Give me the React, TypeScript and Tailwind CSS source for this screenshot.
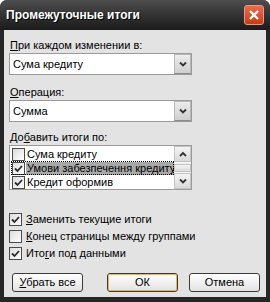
import React from "react";

const font = { fontFamily: '"Liberation Sans", Arial, sans-serif' };

function Check({ checked }: { checked?: boolean }) {
  return (
    <span className="w-[13px] h-[13px] shrink-0 border border-[#4a4a4a] bg-gradient-to-br from-[#dcdcdc] to-white flex items-center justify-center">
      {checked && (
        <svg width="9" height="9" viewBox="0 0 9 9">
          <path d="M1 4.5 L3.5 7 L8 2" fill="none" stroke="#2b2b2b" strokeWidth="1.8" />
        </svg>
      )}
    </span>
  );
}

function Chevron({ up }: { up?: boolean }) {
  return (
    <svg width="8" height="6" viewBox="0 0 8 6">
      <path
        d={up ? "M1 5 L4 2 L7 5" : "M1 1.5 L4 4.5 L7 1.5"}
        fill="none"
        stroke="#333"
        strokeWidth="1.8"
      />
    </svg>
  );
}

function Combo({ value }: { value: string }) {
  return (
    <div className="h-[22px] w-[183px] border border-[#9a9a9a] bg-white flex items-center">
      <span className="flex-1 pl-[3px] text-black">{value}</span>
      <div className="w-[17px] h-[20px] bg-gradient-to-b from-[#ececec] to-[#cfcfcf] border border-[#b8b8b8] border-b-[#8c8c8c] flex items-center justify-center">
        <Chevron />
      </div>
    </div>
  );
}

function Btn({ children, primary }: { children: React.ReactNode; primary?: boolean }) {
  return (
    <div className="w-[71px] h-[19px] rounded-[3px] border border-[#3a3a3a] bg-gradient-to-b from-white to-[#e2e2e2] flex items-center justify-center">
      <div
        className={
          "w-full h-full rounded-[2px] flex items-center justify-center text-black " +
          (primary ? "border border-[#f0b24a]" : "")
        }
      >
        {children}
      </div>
    </div>
  );
}

export default function App() {
  const items = [
    { text: "Сума кредиту", checked: false },
    { text: "Умови забезпечення кредиту", checked: true, selected: true },
    { text: "Кредит оформив", checked: true },
  ];

  return (
    <div style={font} className="w-[270px] h-[302px] bg-[#262626] rounded-t-[7px] flex flex-col px-[4px] pb-[5px]">
      <div className="h-[30px] shrink-0 flex items-center justify-between bg-gradient-to-b from-[#4e4e4e] via-[#333] to-[#1b1b1b] -mx-[4px] pl-[6px] pr-[6px] rounded-t-[7px]">
        <span className="text-white font-bold text-[12px] [text-shadow:1px_1px_0_#000]">
          Промежуточные итоги
        </span>
        <div className="w-[20px] h-[20px] rounded-[3px] border border-[#e89a80] bg-gradient-to-b from-[#ef6a45] to-[#c83b14] flex items-center justify-center">
          <svg width="12" height="12" viewBox="0 0 12 12">
            <path d="M2 2 L10 10 M10 2 L2 10" stroke="white" strokeWidth="2.4" />
          </svg>
        </div>
      </div>

      <div className="flex-1 bg-[#e3e3e3] pl-[5px] pt-[9px] text-[11px] text-black flex flex-col">
        <div className="pl-[1px] leading-[13px] mb-[1px]">
          <u>П</u>ри каждом изменении в:
        </div>
        <Combo value="Сума кредиту" />

        <div className="pl-[1px] leading-[13px] mt-[11px] mb-[1px]">
          <u>О</u>перация:
        </div>
        <Combo value="Сумма" />

        <div className="pl-[1px] leading-[13px] mt-[9px] mb-[1px]">
          До<u>б</u>авить итоги по:
        </div>
        <div className="w-[183px] h-[45px] border border-[#9a9a9a] bg-white flex">
          <div className="flex-1 overflow-hidden pl-[1px] pt-[1px] flex flex-col">
            {items.map((it) => (
              <div
                key={it.text}
                className={
                  "h-[14.5px] flex items-center gap-[1px] whitespace-nowrap overflow-hidden " +
                  (it.selected ? "outline-1 outline-dotted outline-black -outline-offset-1" : "")
                }
              >
                <span className="pl-[1px]">
                  <Check checked={it.checked} />
                </span>
                <span
                  className={
                    "leading-[13px] px-[1px] flex-1 " + (it.selected ? "bg-[#a8a8a8]" : "")
                  }
                >
                  {it.text}
                </span>
              </div>
            ))}
          </div>
          <div className="w-[17px] flex flex-col bg-[#f2f2f2]">
            <div className="h-[16px] border border-[#c4c4c4] bg-gradient-to-b from-[#f4f4f4] to-[#d9d9d9] flex items-center justify-center">
              <Chevron up />
            </div>
            <div className="flex-1 flex items-center">
              <div className="w-full h-[8px] border border-[#c4c4c4] bg-gradient-to-b from-[#f4f4f4] to-[#dcdcdc]" />
            </div>
            <div className="h-[16px] border border-[#c4c4c4] bg-gradient-to-b from-[#f4f4f4] to-[#d9d9d9] flex items-center justify-center">
              <Chevron />
            </div>
          </div>
        </div>

        <div className="mt-[23px] flex flex-col gap-[4px]">
          <label className="flex items-center gap-[4px] h-[13px]">
            <Check checked />
            <span><u>З</u>аменить текущие итоги</span>
          </label>
          <label className="flex items-center gap-[4px] h-[13px]">
            <Check />
            <span><u>К</u>онец страницы между группами</span>
          </label>
          <label className="flex items-center gap-[4px] h-[13px]">
            <Check checked />
            <span>Ито<u>г</u>и под данными</span>
          </label>
        </div>

        <div className="mt-[13px] flex pl-[3px]">
          <Btn><span><u>У</u>брать все</span></Btn>
          <div className="ml-[24px]">
            <Btn primary>ОК</Btn>
          </div>
          <div className="ml-[11px]">
            <Btn>Отмена</Btn>
          </div>
        </div>
      </div>
    </div>
  );
}
